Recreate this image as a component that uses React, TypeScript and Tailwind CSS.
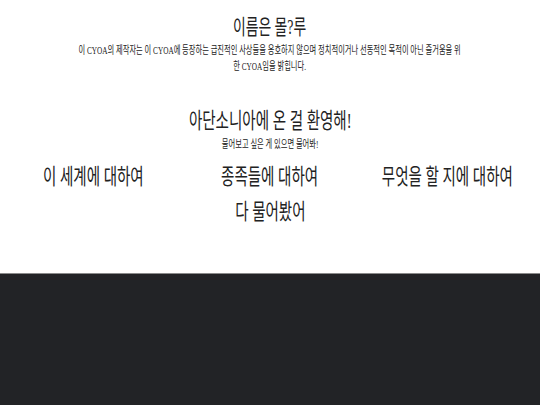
const FONT = { fontFamily: '"Liberation Serif", "Noto Sans CJK KR", serif' };

function Squish({ children, className = '' }: { children: React.ReactNode; className?: string }) {
  return <span className={`inline-block shrink-0 origin-center scale-x-[0.66] whitespace-nowrap ${className}`}>{children}</span>;
}

const TOPICS = ['이 세계에 대하여', '종족들에 대하여', '무엇을 할 지에 대하여'];

export default function App() {
  return (
    <div className="w-[540px] h-[405px] overflow-hidden bg-white text-[#222]" style={FONT}>
      <div className="h-[273px] flex flex-col items-center">
        <h1 className="mt-[12px] text-[21px] leading-[30px]">
          <Squish>이름은 몰?루</Squish>
        </h1>
        <p className="shrink-0 origin-center scale-x-[0.66] whitespace-nowrap text-center text-[11px] leading-[16px]">
          이 CYOA의 제작자는 이 CYOA에 등장하는 급진적인 사상들을 옹호하지 않으며 정치적이거나 선동적인 목적이 아닌 즐거움을 위
          <br />한 CYOA임을 밝힙니다.
        </p>

        <h2 className="mt-[32px] text-[22px] leading-[30px]">
          <Squish>아단소니아에 온 걸 환영해!</Squish>
        </h2>
        <div className="mt-[1px] text-[11px] leading-[14px]">
          <Squish>물어보고 싶은 게 있으면 물어봐!</Squish>
        </div>

        <div className="mt-[11px] grid w-[531px] grid-cols-3 text-[22px] leading-[30px]">
          {TOPICS.map((t) => (
            <div key={t} className="flex justify-center">
              <Squish>{t}</Squish>
            </div>
          ))}
        </div>
        <div className="mt-[5px] text-[22px] leading-[30px]">
          <Squish>다 물어봤어</Squish>
        </div>
      </div>
      <div className="h-[132px] border-t border-[#8a8a8a] bg-[#222326]" />
    </div>
  );
}
